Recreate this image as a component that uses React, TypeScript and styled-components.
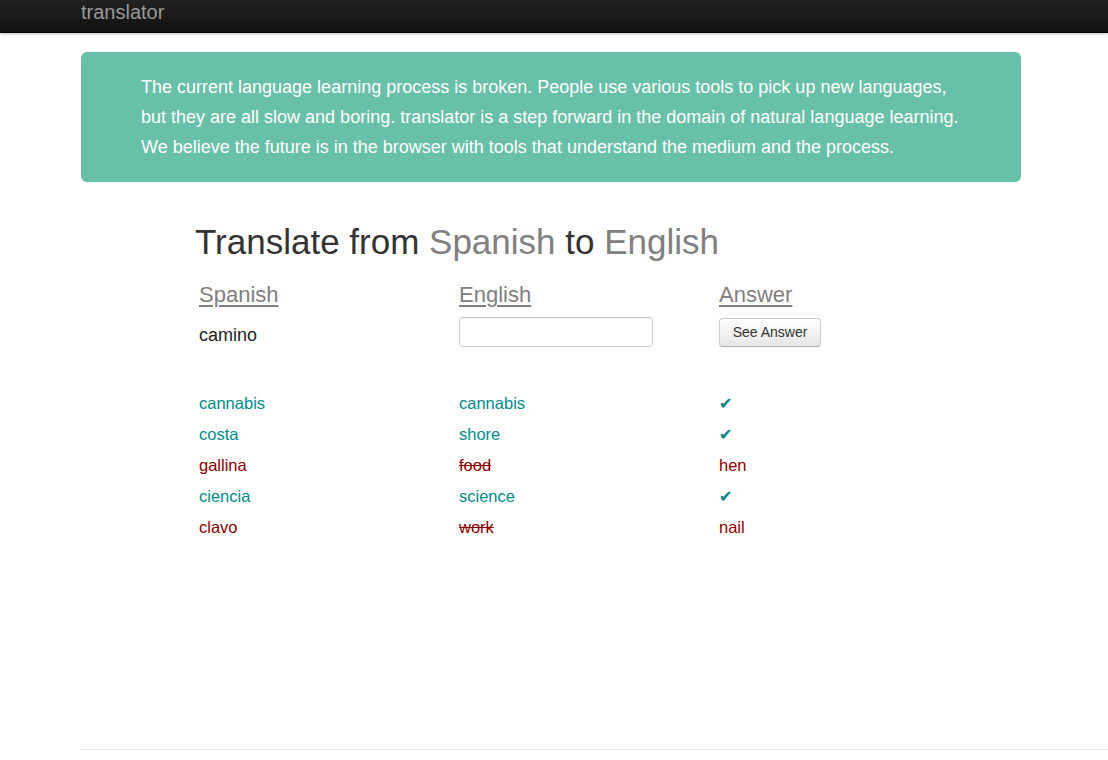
import React from "react"
import styled, { createGlobalStyle } from "styled-components"

type Result = {
  spanish: string
  guess: string
  answer: string
  correct: boolean
}

const results: Result[] = [
  { spanish: "cannabis", guess: "cannabis", answer: "cannabis", correct: true },
  { spanish: "costa", guess: "shore", answer: "shore", correct: true },
  { spanish: "gallina", guess: "food", answer: "hen", correct: false },
  { spanish: "ciencia", guess: "science", answer: "science", correct: true },
  { spanish: "clavo", guess: "work", answer: "nail", correct: false },
]

const GlobalStyle = createGlobalStyle`
  html, body {
    margin: 0;
    padding: 0;
    background: #fff;
  }
  body {
    font-family: "Liberation Sans", Arial, Helvetica, sans-serif;
    font-size: 14px;
    color: #333;
  }
`

const Page = styled.div`
  min-height: 760px;
  display: flex;
  flex-direction: column;
`

const Navbar = styled.div`
  height: 32px;
  background-image: linear-gradient(to bottom, #222, #111);
  border-bottom: 1px solid #000;
  box-shadow: 0 1px 3px rgba(0, 0, 0, 0.25);
`

const Brand = styled.div`
  margin-left: 81px;
  padding-top: 2px;
  font-size: 20px;
  line-height: 20px;
  color: #999;
`

const Container = styled.div`
  width: 940px;
  margin-left: 81px;
`

const Hero = styled.div`
  margin-top: 19px;
  padding: 20px 60px;
  height: 90px;
  background: #69c0a8;
  border-radius: 6px;
  color: #fff;
  font-size: 18px;
  line-height: 30px;
`

const Trainer = styled.div`
  padding-left: 114px;
  margin-top: 40px;
`

const Title = styled.h1`
  margin: 0;
  font-size: 35px;
  font-weight: normal;
  line-height: 40px;
  color: #333;
`

const Lang = styled.span`
  color: #808080;
`

const Grid = styled.div`
  display: grid;
  grid-template-columns: 260px 260px 260px;
  padding-left: 4px;
`

const HeadRow = styled(Grid)`
  margin-top: 18px;
`

const ColumnHead = styled.a`
  justify-self: start;
  font-size: 22px;
  line-height: 30px;
  color: #808080;
  text-decoration: underline;
  text-underline-offset: 3px;
  text-decoration-thickness: 2px;
`

const QuizRow = styled(Grid)`
  margin-top: 3px;
  align-items: center;
  height: 30px;
`

const Word = styled.div`
  font-size: 18px;
  line-height: 30px;
  color: #222;
  padding-top: 7px;
`

const Input = styled.input`
  box-sizing: border-box;
  width: 194px;
  height: 30px;
  padding: 4px 6px;
  border: 1px solid #ccc;
  border-radius: 3px;
  box-shadow: inset 0 1px 1px rgba(0, 0, 0, 0.075);
  font-family: inherit;
  font-size: 14px;
  outline: none;
`

const Button = styled.button`
  justify-self: start;
  box-sizing: border-box;
  width: 102px;
  height: 29px;
  margin-top: 1px;
  padding: 0;
  border: 1px solid #ccc;
  border-bottom-color: #b3b3b3;
  border-radius: 4px;
  background-image: linear-gradient(to bottom, #fff, #e6e6e6);
  box-shadow: inset 0 1px 0 rgba(255, 255, 255, 0.2), 0 1px 2px rgba(0, 0, 0, 0.05);
  font-family: inherit;
  font-size: 14px;
  color: #333;
  cursor: pointer;
`

const Results = styled.div`
  margin-top: 45px;
`

const ResultRow = styled(Grid)<{ $correct: boolean }>`
  height: 31px;
  align-items: center;
  font-size: 16.5px;
  color: ${p => (p.$correct ? "#008b8b" : "#8b0000")};
`

const Guess = styled.span<{ $wrong: boolean }>`
  text-decoration: ${p => (p.$wrong ? "line-through" : "none")};
`

const Check = styled.span`
  font-family: "DejaVu Sans", sans-serif;
  font-size: 16px;
  color: #00807f;
`

const Spacer = styled.div`
  flex: 1;
`

const Footer = styled.hr`
  margin: 0 0 9px 81px;
  border: 0;
  border-top: 1px solid #e5e5e5;
  border-bottom: 1px solid #fff;
`

export default function App(): JSX.Element {
  return (
    <Page>
      <GlobalStyle />
      <Navbar>
        <Brand>translator</Brand>
      </Navbar>
      <Container>
        <Hero>
          The current language learning process is broken. People use various tools to pick up new languages,
          but they are all slow and boring. translator is a step forward in the domain of natural language learning.
          We believe the future is in the browser with tools that understand the medium and the process.
        </Hero>
        <Trainer>
          <Title>
            Translate from <Lang>Spanish</Lang> to <Lang>English</Lang>
          </Title>
          <HeadRow>
            <ColumnHead>Spanish</ColumnHead>
            <ColumnHead>English</ColumnHead>
            <ColumnHead>Answer</ColumnHead>
          </HeadRow>
          <QuizRow>
            <Word>camino</Word>
            <Input type="text" />
            <Button>See Answer</Button>
          </QuizRow>
          <Results>
            {results.map(r => (
              <ResultRow key={r.spanish} $correct={r.correct}>
                <span>{r.spanish}</span>
                <Guess $wrong={!r.correct}>{r.guess}</Guess>
                {r.correct ? <Check>✔</Check> : <span>{r.answer}</span>}
              </ResultRow>
            ))}
          </Results>
        </Trainer>
      </Container>
      <Spacer />
      <Footer />
    </Page>
  )
}
